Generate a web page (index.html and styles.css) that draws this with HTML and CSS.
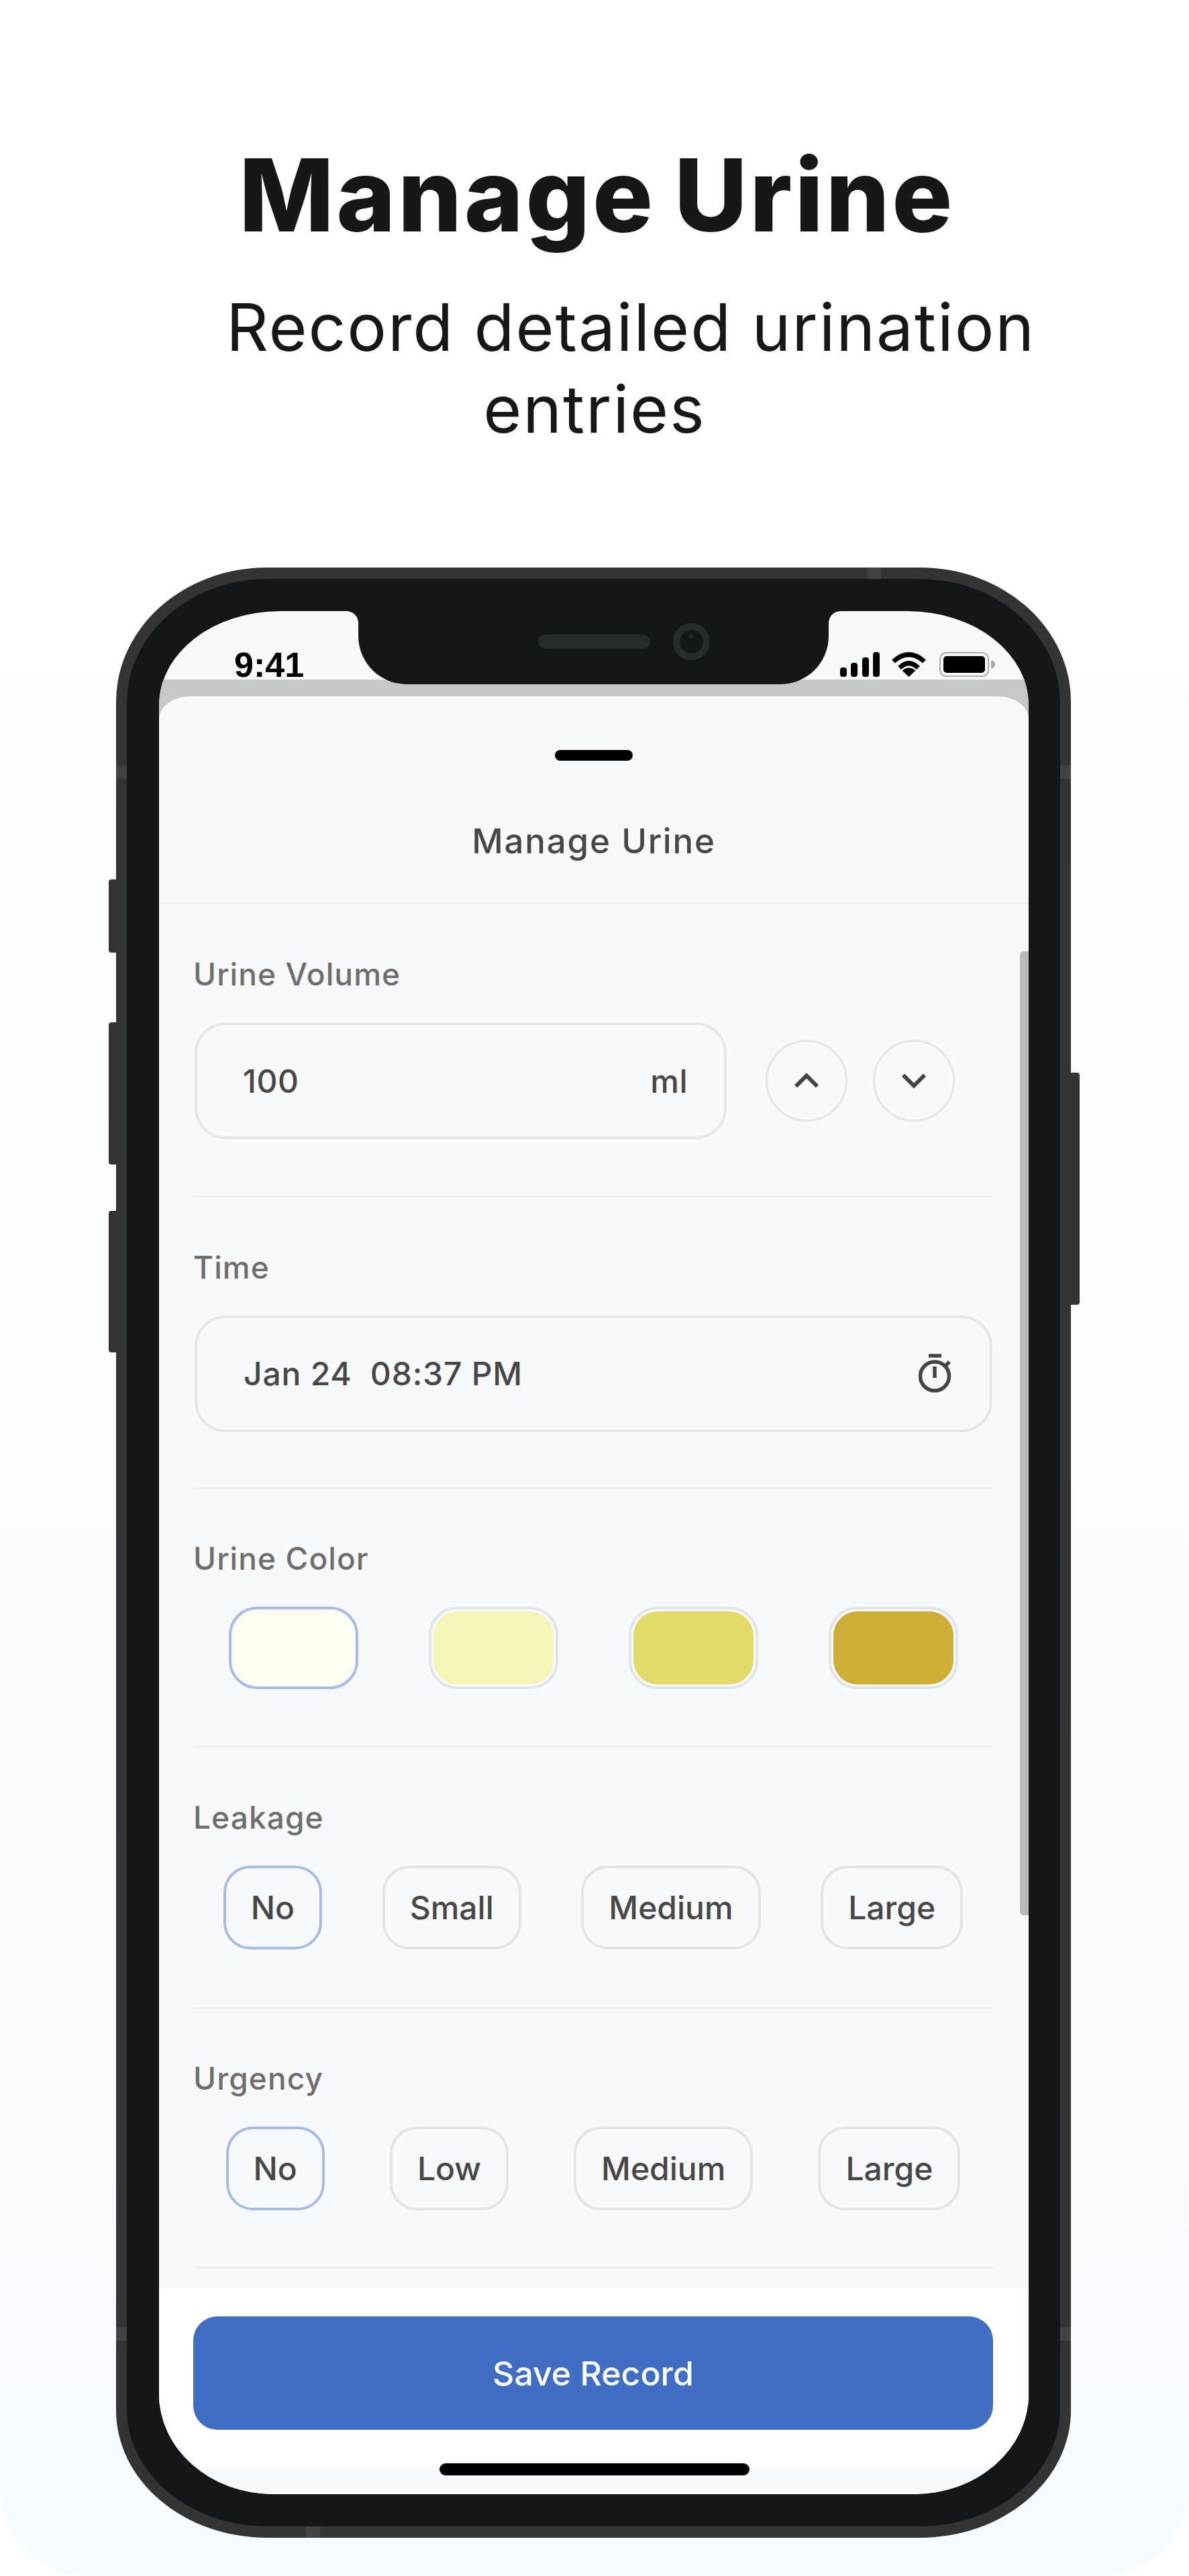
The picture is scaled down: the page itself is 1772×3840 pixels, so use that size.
FILE: index.html
```html
<!DOCTYPE html>
<html lang="en">
<head>
<meta charset="utf-8">
<title>Manage Urine</title>
<link rel="stylesheet" href="styles.css">
</head>
<body>
<main class="page">
  <header class="hero">
    <h1 class="hero-title">Manage Urine</h1>
    <p class="hero-sub">Record detailed urination<br>entries</p>
  </header>

  <div class="phone">
    <span class="side side-l1"></span>
    <span class="side side-l2"></span>
    <span class="side side-l3"></span>
    <span class="side side-r1"></span>
    <span class="tick tick-lt"></span>
    <span class="tick tick-rt"></span>
    <span class="tick tick-lb"></span>
    <span class="tick tick-rb"></span>
    <span class="tick tick-top"></span>
    <span class="tick tick-bot"></span>

    <div class="bezel">
      <div class="screen">
        <div class="notch">
          <span class="speaker"></span>
          <span class="camera"><span class="lens-dot"></span></span>
        </div>

        <div class="status">
          <span class="clock">9:41</span>
          <div class="status-icons">
            <svg class="ic-signal" viewBox="0 0 59 37" aria-hidden="true">
              <rect x="0" y="23" width="10" height="14" rx="4"/>
              <rect x="16" y="16" width="10" height="21" rx="4"/>
              <rect x="33" y="8" width="10" height="29" rx="4"/>
              <rect x="49" y="0" width="10" height="37" rx="4"/>
            </svg>
            <svg class="ic-wifi" viewBox="0 0 53 38" aria-hidden="true">
              <path class="wifi-arc" d="M3.5 15 Q26.5 -5.500 49.500 15"/>
              <path class="wifi-arc" d="M12.500 24.500 Q26.500 11 40.500 24.500"/>
              <path d="M26.500 38 L16.500 28.500 Q26.500 20.500 36.500 28.500 Z"/>
            </svg>
            <svg class="ic-battery" viewBox="0 0 83 37" aria-hidden="true">
              <rect class="bat-shell" x="1" y="1" width="72" height="35" rx="9"/>
              <rect x="6" y="6" width="62" height="25" rx="5"/>
              <path class="bat-cap" d="M77 12 Q83 14 83 18.500 Q83 23 77 25 Z"/>
            </svg>
          </div>
        </div>

        <div class="scrim">
          <section class="sheet">
            <div class="sheet-head">
              <span class="grabber"></span>
              <h2 class="sheet-title">Manage Urine</h2>
            </div>

            <div class="form">
              <span class="scrollbar"></span>

              <div class="group group-first">
                <div class="label">Urine Volume</div>
                <div class="volume-row">
                  <div class="field field-volume"><span>100</span><span>ml</span></div>
                  <div class="steppers">
                    <div class="stepper">
                      <svg class="chevron" viewBox="0 0 36 22" aria-hidden="true"><path d="M2 19.500 L18 3.500 L34 19.500"/></svg>
                    </div>
                    <div class="stepper">
                      <svg class="chevron" viewBox="0 0 36 22" aria-hidden="true"><path d="M2 2.500 L18 18.500 L34 2.500"/></svg>
                    </div>
                  </div>
                </div>
              </div>

              <div class="group group-time">
                <div class="label">Time</div>
                <div class="field field-time">
                  <span class="time-text">Jan 24&nbsp;&nbsp;08:37 PM</span>
                  <svg class="stopwatch" viewBox="0 0 52 60" aria-hidden="true">
                    <path d="M15 3 H34"/>
                    <circle cx="24" cy="33.500" r="21.500"/>
                    <path d="M24 19 V36"/>
                    <path d="M40 18 L46 12"/>
                  </svg>
                </div>
              </div>

              <div class="group">
                <div class="label">Urine Color</div>
                <div class="options">
                  <div class="swatch swatch-selected"><span class="swatch-fill fill-1"></span></div>
                  <div class="swatch"><span class="swatch-fill fill-2"></span></div>
                  <div class="swatch"><span class="swatch-fill fill-3"></span></div>
                  <div class="swatch"><span class="swatch-fill fill-4"></span></div>
                </div>
              </div>

              <div class="group group-leak">
                <div class="label">Leakage</div>
                <div class="options">
                  <div class="chip chip-selected">No</div>
                  <div class="chip">Small</div>
                  <div class="chip">Medium</div>
                  <div class="chip">Large</div>
                </div>
              </div>

              <div class="group">
                <div class="label">Urgency</div>
                <div class="options">
                  <div class="chip chip-selected">No</div>
                  <div class="chip">Low</div>
                  <div class="chip">Medium</div>
                  <div class="chip">Large</div>
                </div>
              </div>
            </div>

            <div class="footer">
              <div class="save">Save Record</div>
            </div>
          </section>
        </div>

        <div class="home-zone"><span class="home-bar"></span></div>
      </div>
    </div>
  </div>
</main>
</body>
</html>
```

FILE: styles.css
```css
* { box-sizing: border-box; }

html, body {
  margin: 0;
  padding: 0;
  background: #fff;
}

body {
  width: 1772px;
  height: 3840px;
  font-family: Inter, "Noto Sans", sans-serif;
  overflow: hidden;
}

.page {
  width: 1772px;
  height: 3840px;
  padding-top: 216px;
  border-radius: 130px;
  background: linear-gradient(180deg, #ffffff 0%, #fefeff 20%, #f6fbff 100%);
}

/* Hero copy */
.hero {
  text-align: center;
  color: #171717;
}

.hero-title {
  margin: 0;
  padding-left: 7px;
  font-size: 150px;
  line-height: 150px;
  font-weight: 800;
  letter-spacing: 3.5px;
  word-spacing: -8px;
}

.hero-sub {
  margin: 61px 0 0;
  font-size: 98px;
  line-height: 121.5px;
  font-weight: 400;
  letter-spacing: 1.9px;
  text-indent: 108px;
}

/* Device */
.phone {
  position: relative;
  width: 1423px;
  height: 2937px;
  margin: 176px 0 0 173px;
  padding: 17px 16px;
  background: #333333;
  border-radius: 225px 225px 225px 225px / 200px 200px 190px 190px;
}

.side {
  position: absolute;
  background: #333333;
  width: 14px;
}
.side-l1 { left: -11px; top: 465px; height: 109px; border-radius: 4px 0 0 4px; }
.side-l2 { left: -11px; top: 678px; height: 212px; border-radius: 4px 0 0 4px; }
.side-l3 { left: -11px; top: 959px; height: 211px; border-radius: 4px 0 0 4px; }
.side-r1 { right: -13px; top: 753px; height: 346px; border-radius: 0 4px 4px 0; }

.tick {
  position: absolute;
  background: #434343;
}
.tick-lt { left: 0; top: 295px; width: 16px; height: 20px; }
.tick-rt { right: 0; top: 295px; width: 16px; height: 20px; }
.tick-lb { left: 0; top: 2623px; width: 16px; height: 20px; }
.tick-rb { right: 0; top: 2623px; width: 16px; height: 20px; }
.tick-top { left: 1120px; top: 0; width: 20px; height: 17px; }
.tick-bot { left: 283px; bottom: 0; width: 21px; height: 17px; }

.bezel {
  position: relative;
  height: 100%;
  padding: 48px 47px 48px 48px;
  background: #131718;
  border-radius: 210px 210px 210px 210px / 185px 185px 175px 175px;
}

.screen {
  position: relative;
  display: flex;
  flex-direction: column;
  height: 2807px;
  overflow: hidden;
  background: #f8f9fb;
  border-radius: 180px 180px 170px 170px / 140px 140px 150px 150px;
}

/* Notch */
.notch {
  position: absolute;
  left: 297px;
  top: 0;
  z-index: 3;
  display: flex;
  align-items: center;
  justify-content: flex-end;
  width: 701px;
  height: 109px;
  padding: 0 177px 19px 0;
  gap: 34px;
  background: #131718;
  border-radius: 0 0 72px 72px;
}
.notch::before,
.notch::after {
  content: "";
  position: absolute;
  top: 0;
  width: 17px;
  height: 17px;
}
.notch::before {
  left: -17px;
  background: radial-gradient(circle at 0 100%, transparent 16.5px, #131718 17px);
}
.notch::after {
  right: -17px;
  background: radial-gradient(circle at 100% 100%, transparent 16.5px, #131718 17px);
}

.speaker {
  width: 167px;
  height: 21px;
  border-radius: 11px;
  background: #262b2e;
}

.camera {
  position: relative;
  width: 55px;
  height: 55px;
  border: 10px solid #262b2e;
  border-radius: 50%;
}

.lens-dot {
  position: absolute;
  left: 14px;
  top: 6px;
  width: 7px;
  height: 7px;
  border-radius: 50%;
  background: #262b2e;
}

/* Status bar */
.status {
  display: flex;
  flex: none;
  align-items: flex-end;
  justify-content: space-between;
  height: 102px;
  padding: 0 50px 4px 112px;
  color: #000;
}

.clock {
  font-family: "Liberation Sans", Arial, sans-serif;
  font-size: 52px;
  line-height: 52px;
  font-weight: 700;
  margin-bottom: -8px;
}

.status-icons {
  display: flex;
  align-items: flex-end;
}

.ic-signal { width: 59px; height: 37px; display: block; }
.ic-wifi { width: 53px; height: 38px; display: block; margin-left: 17px; }
.ic-battery { width: 83px; height: 37px; display: block; margin-left: 19px; }

.wifi-arc {
  fill: none;
  stroke: #000;
  stroke-width: 7;
}
.bat-shell {
  fill: none;
  stroke: #a9a9ab;
  stroke-width: 2;
}
.bat-cap { fill: #a9a9ab; }

/* Sheet */
.scrim {
  display: flex;
  flex: 1;
  min-height: 0;
  padding-top: 25px;
  background: #c6c7c9;
}

.sheet {
  display: flex;
  flex-direction: column;
  width: 100%;
  background: #f8f9fb;
  border-radius: 46px 46px 0 0 / 34px 34px 0 0;
}

.sheet-head {
  display: flex;
  flex: none;
  flex-direction: column;
  align-items: center;
  height: 310px;
  padding-top: 80px;
  border-bottom: 3px solid #eeeff1;
}

.grabber {
  width: 116px;
  height: 16px;
  border-radius: 8px;
  background: #000;
}

.sheet-title {
  margin: 89px 0 0;
  font-size: 51px;
  line-height: 62px;
  font-weight: 500;
  letter-spacing: 1.8px;
  color: #474747;
}

.form {
  position: relative;
  flex: 1;
  min-height: 0;
  padding: 0 53px 0 51px;
}

.scrollbar {
  position: absolute;
  right: 0;
  top: 70px;
  width: 13px;
  height: 1437px;
  border-radius: 6px 0 0 6px;
  background: #b8b9ba;
}

.group {
  padding: 75.5px 0 84px;
  border-bottom: 3px solid #eeeff1;
}
.group-first { padding-top: 76px; }
.group-time { padding-bottom: 82px; }
.group-leak { padding-bottom: 86px; }

.label {
  margin-bottom: 44px;
  font-size: 46px;
  line-height: 56px;
  font-weight: 500;
  letter-spacing: 1.1px;
  color: #6e6e6e;
}

.field {
  display: flex;
  align-items: center;
  justify-content: space-between;
  height: 174px;
  border: 4px solid #e5e6e8;
  border-radius: 46px;
  font-size: 48px;
  font-weight: 500;
  letter-spacing: 0.5px;
  color: #474747;
}

.volume-row {
  display: flex;
  align-items: center;
}

.field-volume {
  width: 793px;
  margin-left: 2px;
  padding: 0 54px 0 68px;
}

.steppers {
  display: flex;
  gap: 38px;
  margin-left: 58px;
}

.stepper {
  display: flex;
  align-items: center;
  justify-content: center;
  width: 122px;
  height: 122px;
  border: 3.5px solid #e3e4e5;
  border-radius: 50%;
}

.chevron {
  display: block;
  width: 36px;
  height: 22px;
}
.chevron path {
  fill: none;
  stroke: #444;
  stroke-width: 6;
}

.field-time {
  width: 1189px;
  margin-left: 2px;
  padding: 0 54px 0 69px;
}

.time-text { letter-spacing: 0.8px; }

.stopwatch {
  display: block;
  width: 52px;
  height: 60px;
}
.stopwatch path,
.stopwatch circle {
  fill: none;
  stroke: #444;
  stroke-width: 5.5;
}

/* Option rows */
.options {
  display: flex;
  justify-content: space-around;
}

.swatch {
  width: 193px;
  height: 123px;
  padding: 3px;
  border: 4px solid #e3e4e5;
  border-radius: 42px;
}
.swatch-selected { border-color: #a6bce4; }

.swatch-fill {
  display: block;
  width: 100%;
  height: 100%;
  border-radius: 36px;
}
.fill-1 { background: #fdfff0; }
.fill-2 { background: #f6f5b8; }
.fill-3 { background: #e2db6a; }
.fill-4 { background: #cfae38; }

.chip {
  display: flex;
  align-items: center;
  height: 125px;
  padding: 0 37px;
  border: 4px solid #e3e4e5;
  border-radius: 40px;
  font-size: 48px;
  font-weight: 500;
  color: #474747;
}
.chip-selected { border-color: #a6bce4; }

/* Footer */
.footer {
  flex: none;
  height: 268px;
  padding: 43px 53px 0 51px;
  background: #fff;
}

.save {
  display: flex;
  align-items: center;
  justify-content: center;
  height: 169px;
  border-radius: 36px;
  background: #406ec4;
  color: #fff;
  font-size: 50px;
  font-weight: 500;
}

.home-zone {
  position: relative;
  flex: none;
  height: 40px;
  background: #f8f9fb;
}

.home-bar {
  position: absolute;
  left: 418px;
  top: -6px;
  width: 462px;
  height: 18px;
  border-radius: 9px;
  background: #000;
}
```
